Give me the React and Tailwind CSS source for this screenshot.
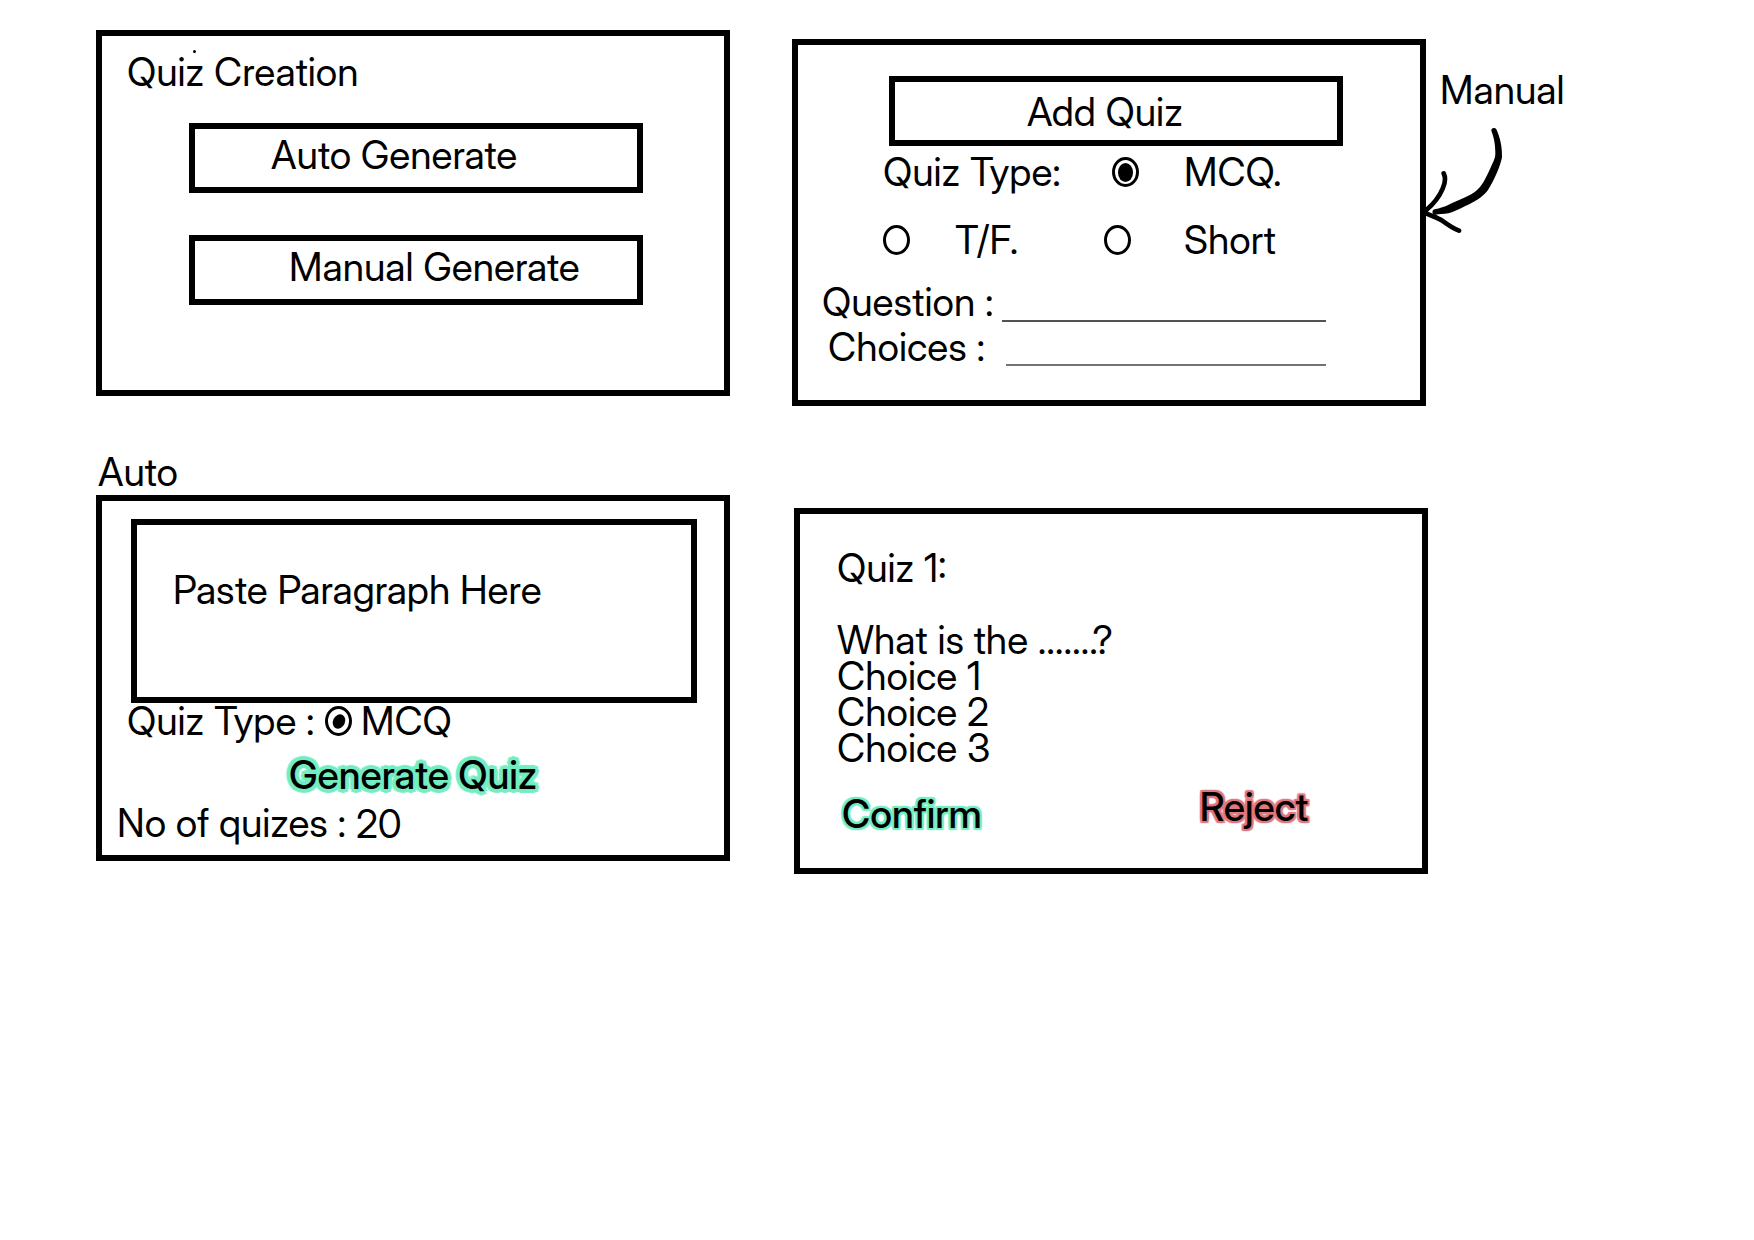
import React from "react";

function Panel({ className = "", children }) {
  return (
    <section className={`flex flex-col items-start border-6 border-black ${className}`}>
      {children}
    </section>
  );
}

function OutlineButton({ className = "", children }) {
  return (
    <button
      type="button"
      className={`flex h-[70px] w-[73%] items-start border-6 border-black text-left whitespace-nowrap ${className}`}
    >
      {children}
    </button>
  );
}

function Radio({ className = "", ...props }) {
  return (
    <input
      type="radio"
      className={`grid h-[30px] w-[27px] shrink-0 appearance-none place-content-center rounded-[50%] border-3 border-black before:hidden before:rounded-[50%] before:bg-black before:content-[''] checked:before:block ${className}`}
      {...props}
    />
  );
}

function GlowButton({ className = "", children }) {
  return (
    <button type="button" className={`font-medium whitespace-nowrap ${className}`}>
      {children}
    </button>
  );
}

function QuizCreation() {
  return (
    <Panel className="pt-[18px] pb-[85px]">
      <h1 className="relative mb-[33px] ml-[25px]">
        Quiz Creation
        <span className="absolute -top-1 left-[66px] size-[3px] rounded-full bg-black" />
      </h1>
      <OutlineButton className="mb-[42px] ml-[14%] pt-2 pl-[76px]">Auto Generate</OutlineButton>
      <OutlineButton className="ml-[14%] pt-2 pl-[94px]">Manual Generate</OutlineButton>
    </Panel>
  );
}

function ManualQuiz() {
  return (
    <Panel className="mt-[9px] pt-[31px] pb-[34px]">
      <OutlineButton className="ml-[91px] pt-3 pl-[132px]">Add Quiz</OutlineButton>
      <div
        role="radiogroup"
        aria-labelledby="manual-type"
        className="mt-2 ml-[85px] grid grid-cols-[72px_149px_80px_auto] items-center gap-y-8"
      >
        <span id="manual-type" className="col-span-2">Quiz Type:</span>
        <Radio
          id="manual-mcq"
          name="manual-type"
          defaultChecked
          className="ml-2 before:h-[19px] before:w-[15px]"
        />
        <label htmlFor="manual-mcq">MCQ.</label>
        <Radio id="manual-tf" name="manual-type" className="before:h-[19px] before:w-[15px]" />
        <label htmlFor="manual-tf">T/F.</label>
        <Radio id="manual-short" name="manual-type" className="before:h-[19px] before:w-[15px]" />
        <label htmlFor="manual-short">Short</label>
      </div>
      <div className="mt-[26px] ml-6 flex w-[81%] items-start">
        <label htmlFor="question" className="w-[180px] shrink-0 whitespace-nowrap">Question :</label>
        <input
          id="question"
          type="text"
          className="h-[38px] min-w-0 flex-1 border-b-2 border-neutral-600 outline-none"
        />
      </div>
      <div className="mt-[7px] ml-[30px] flex w-[80%] items-start">
        <label htmlFor="choices" className="w-[178px] shrink-0 whitespace-nowrap">Choices :</label>
        <input
          id="choices"
          type="text"
          className="h-[37px] min-w-0 flex-1 border-b-2 border-neutral-500 outline-none"
        />
      </div>
    </Panel>
  );
}

function ManualNote() {
  return (
    <div className="pt-[42px]">
      <p className="ml-3.5">Manual</p>
      <svg aria-hidden="true" viewBox="72 192 240 336" className="mt-4 -ml-0.5 h-28 w-20">
        <path d="M274 212 C273 204 284 201 289 208 C300 232 307 260 306 292 C300 322 282 362 264 390 C247 412 224 426 196 438 C176 448 158 457 145 460 C130 462 118 463 106 464 C96 464 94 451 104 448 C120 444 134 440 146 434 C174 421 203 411 223 397 C246 381 260 350 274 318 C283 300 286 292 286 280 C286 250 281 230 274 212 Z" />
        <path
          d="M131 340 C137 352 137 366 128 386 C118 410 103 430 79 450"
          fill="none"
          stroke="black"
          strokeWidth="14"
          strokeLinecap="round"
        />
        <path
          d="M79 460 C96 468 112 473 127 482 C142 493 155 503 177 512"
          fill="none"
          stroke="black"
          strokeWidth="14"
          strokeLinecap="round"
        />
      </svg>
    </div>
  );
}

function AutoQuiz() {
  return (
    <div>
      <h2 className="mb-[5px] ml-0.5">Auto</h2>
      <Panel className="pt-[18px] pb-3.5">
        <textarea
          aria-label="Paragraph"
          placeholder="Paste Paragraph Here"
          className="ml-[29px] h-[184px] w-[91%] resize-none border-6 border-black pt-[47px] pl-9 outline-none placeholder:text-black placeholder:opacity-100"
        />
        <div className="ml-[25px] flex items-center">
          <span className="w-[198px] whitespace-nowrap">Quiz Type :</span>
          <Radio
            id="auto-mcq"
            name="auto-type"
            defaultChecked
            className="before:h-[15px] before:w-3 before:rotate-[25deg]"
          />
          <label htmlFor="auto-mcq" className="ml-[9px]">MCQ</label>
        </div>
        <GlowButton className="mt-[18px] ml-[187px] [text-shadow:4px_0_1px_#74edc2,-4px_0_1px_#74edc2,0_4px_1px_#74edc2,0_-4px_1px_#74edc2,3px_3px_1px_#74edc2,-3px_3px_1px_#74edc2,3px_-3px_1px_#74edc2,-3px_-3px_1px_#74edc2]">
          Generate Quiz
        </GlowButton>
        <div className="mt-3 ml-[15px] flex">
          <label htmlFor="count" className="whitespace-pre">No of quizes : </label>
          <input id="count" type="text" defaultValue="20" className="h-9 w-16 outline-none" />
        </div>
      </Panel>
    </div>
  );
}

function QuizReview() {
  return (
    <Panel className="mt-[54px] pt-9 pb-9">
      <h2 className="ml-[37px]">Quiz 1:</h2>
      <p className="mt-9 ml-[37px]">What is the …….?</p>
      <ul className="ml-[37px]">
        <li>Choice 1</li>
        <li>Choice 2</li>
        <li>Choice 3</li>
      </ul>
      <div className="mt-[23px] ml-[42px] flex w-[75%] items-start justify-between">
        <GlowButton className="mt-[7px] [text-shadow:2px_0_1px_#74edc2,-2px_0_1px_#74edc2,0_2px_1px_#74edc2,0_-2px_1px_#74edc2,2px_2px_1px_#74edc2,-2px_2px_1px_#74edc2,2px_-2px_1px_#74edc2,-2px_-2px_1px_#74edc2]">
          Confirm
        </GlowButton>
        <GlowButton className="[text-shadow:2px_0_1px_#e0777f,-2px_0_1px_#e0777f,0_2px_1px_#e0777f,0_-2px_1px_#e0777f,2px_2px_1px_#e0777f,-2px_2px_1px_#e0777f,2px_-2px_1px_#e0777f,-2px_-2px_1px_#e0777f]">
          Reject
        </GlowButton>
      </div>
    </Panel>
  );
}

export default function App() {
  return (
    <main className="min-h-screen bg-white pt-[30px] pl-24 font-['Inter_Display','Inter',sans-serif] text-[39px] leading-9 text-black">
      <div className="grid grid-cols-[minmax(0,634fr)_minmax(0,62fr)_minmax(0,634fr)_minmax(0,328fr)] items-start">
        <QuizCreation />
        <span />
        <ManualQuiz />
        <ManualNote />
      </div>
      <div className="mt-12 grid grid-cols-[minmax(0,634fr)_minmax(0,64fr)_minmax(0,634fr)_minmax(0,326fr)] items-start">
        <AutoQuiz />
        <span />
        <QuizReview />
      </div>
    </main>
  );
}
